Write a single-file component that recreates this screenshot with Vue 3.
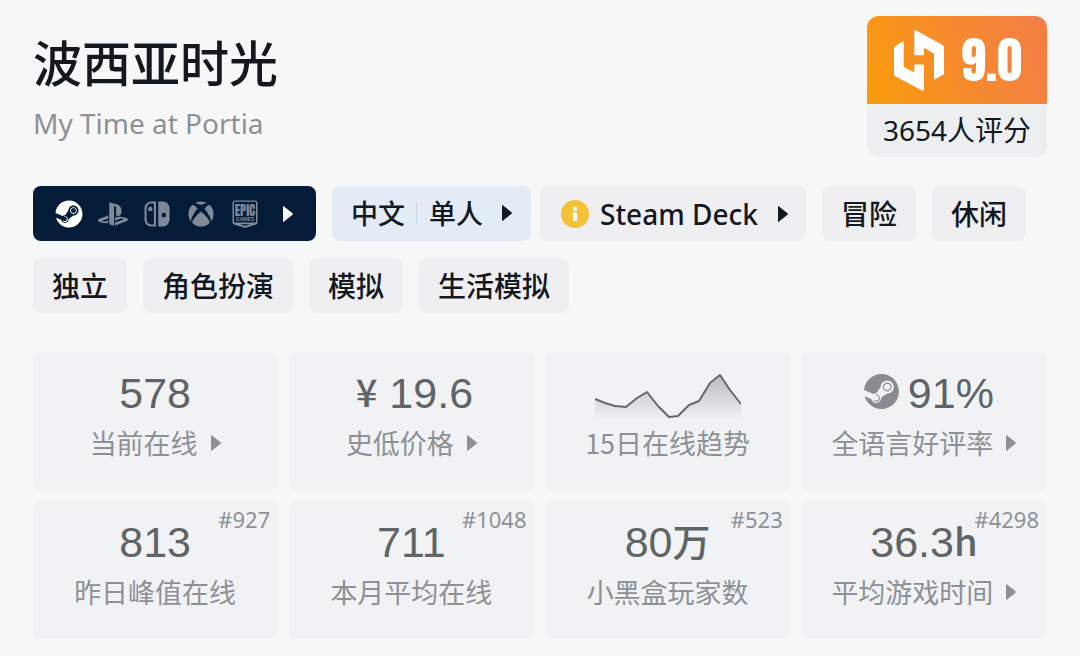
<script setup>
const steamPath =
  'M11.979 0C5.678 0 .511 4.86.022 11.037l6.432 2.658c.545-.371 1.203-.59 1.912-.59.063 0 .125.004.188.006l2.861-4.142V8.91c0-2.495 2.028-4.524 4.524-4.524 2.494 0 4.524 2.031 4.524 4.527s-2.03 4.525-4.524 4.525h-.105l-4.076 2.911c0 .052.004.105.004.159 0 1.875-1.515 3.396-3.39 3.396-1.635 0-3.016-1.173-3.331-2.727L.436 15.27C1.862 20.307 6.486 24 11.979 24c6.627 0 11.999-5.373 11.999-12S18.605 0 11.979 0zM7.54 18.21l-1.473-.61c.262.543.714.999 1.314 1.25 1.297.539 2.793-.076 3.332-1.375.263-.63.264-1.319.005-1.949s-.75-1.121-1.377-1.383c-.624-.26-1.29-.249-1.878-.03l1.523.63c.956.4 1.409 1.5 1.009 2.455-.397.957-1.497 1.41-2.454 1.012H7.54zm11.415-9.303c0-1.662-1.353-3.015-3.015-3.015-1.665 0-3.015 1.353-3.015 3.015 0 1.665 1.35 3.015 3.015 3.015 1.663 0 3.015-1.35 3.015-3.015zm-5.273-.005c0-1.252 1.013-2.266 2.265-2.266 1.249 0 2.266 1.014 2.266 2.266 0 1.251-1.017 2.265-2.266 2.265-1.253 0-2.265-1.014-2.265-2.265z'

const genres = ['冒险', '休闲', '独立', '角色扮演', '模拟', '生活模拟']

const stats = [
  { value: '578', label: '当前在线', more: true },
  { prefix: '¥', value: '19.6', label: '史低价格', more: true },
  { chart: true, label: '15日在线趋势' },
  { steam: true, value: '91%', label: '全语言好评率', more: true },
  { value: '813', label: '昨日峰值在线', rank: '#927' },
  { value: '711', label: '本月平均在线', rank: '#1048' },
  { value: '80', unit: '万', label: '小黑盒玩家数', rank: '#523' },
  { value: '36.3', unit: 'h', label: '平均游戏时间', rank: '#4298', more: true },
]

const trend = '0,31 10,35 20,38 31,39 42,30 52,24 63,38 74,49 83,48 94,37 104,33 115,15 125,7 135,22 146,36'
</script>

<template>
  <main class="page">
    <header class="header">
      <div class="titles">
        <h1 class="title">波西亚时光</h1>
        <p class="subtitle">My Time at Portia</p>
      </div>
      <section class="score">
        <div class="score-top">
          <svg class="logo" viewBox="0 0 50 61" aria-hidden="true">
            <path d="M1 16.200 9.700 11v26L20.300 42.500V34.500H30V60Q30 61.500 28.500 60.700L1 46Q0 45.500 0 44.500V18Q0 16.800 1 16.200Z" />
            <path d="M20.300 1Q20.300-.500 21.700.300L49 15.200Q50 15.800 50 17V44.300L40 49.700V23.700L30 17.700V25.300H20.300Z" />
          </svg>
          <strong class="score-value">9.0</strong>
        </div>
        <p class="score-count">3654人评分</p>
      </section>
    </header>

    <nav class="tags">
      <button class="tag platforms" aria-label="平台">
        <svg class="platform on" viewBox="0 0 28 28"><path transform="translate(.5 .5) scale(1.125)" :d="steamPath" /></svg>
        <svg class="platform wide" viewBox="0 0 24 24">
          <path d="M8.985 2.596v17.548l3.915 1.261V6.688c0-.69.304-1.151.794-.991.636.181.76.814.76 1.505v5.876c2.441 1.193 4.362-.002 4.362-3.153 0-3.237-1.126-4.675-4.438-5.827-1.307-.448-3.728-1.186-5.391-1.502h-.002zm4.656 16.242l6.296-2.275c.715-.258.826-.625.246-.818-.586-.192-1.637-.139-2.357.123l-4.205 1.499v-2.385l.24-.085s1.201-.42 2.913-.615c1.696-.18 3.785.029 5.437.661 1.848.601 2.041 1.472 1.576 2.072s-1.622 1.036-1.622 1.036l-8.544 3.107v-2.297l.02-.023zM1.808 18.6c-1.900-.545-2.214-1.668-1.352-2.321.801-.585 2.159-1.051 2.159-1.051l5.616-2.013v2.313L4.205 17c-.705.271-.825.632-.239.826.586.195 1.637.15 2.343-.12L8.247 17v2.074c-.12.03-.256.044-.39.073-1.939.33-3.996.196-6.038-.479z" />
        </svg>
        <svg class="platform" viewBox="0 0 28 28">
          <path fill-rule="evenodd" d="M8 1.500h5v25H8a6.500 6.500 0 0 1-6.500-6.500V8A6.500 6.500 0 0 1 8 1.500zM8 3.600A4.400 4.400 0 0 0 3.600 8v12A4.400 4.400 0 0 0 8 24.400h2.900V3.600z" />
          <circle cx="7.300" cy="9" r="2.300" />
          <path fill-rule="evenodd" d="M15.300 1.500H20A6.500 6.500 0 0 1 26.500 8v12a6.500 6.500 0 0 1-6.500 6.500h-4.700zM20.800 12.800a2.300 2.300 0 1 0 0 4.600 2.300 2.300 0 0 0 0-4.600z" />
        </svg>
        <svg class="platform" viewBox="-1.400 -1.400 26.800 26.800">
          <path d="M4.102 21.033C6.211 22.881 8.977 24 12 24c3.026 0 5.789-1.119 7.902-2.967 1.877-1.912-4.316-8.709-7.902-11.417-3.582 2.708-9.779 9.505-7.898 11.417zm11.160-14.406c2.500 2.961 7.484 10.313 6.076 12.912C23.002 17.480 24 14.861 24 12.004c0-3.340-1.365-6.362-3.570-8.536 0 0-.027-.022-.082-.042-.063-.022-.152-.045-.281-.045-.592 0-1.985.434-4.805 3.246zM3.654 3.426c-.057.020-.082.041-.086.042C1.365 5.642 0 8.664 0 12.004c0 2.854.998 5.473 2.661 7.533-1.401-2.605 3.579-9.951 6.080-12.910-2.820-2.813-4.216-3.245-4.806-3.245-.131 0-.223.021-.281.046v-.002zM12 3.551S9.055 1.828 6.755 1.746c-.903-.033-1.454.295-1.521.339C7.379.646 9.659 0 11.984 0H12c2.334 0 4.605.646 6.766 2.085-.068-.046-.615-.372-1.520-.339C14.946 1.828 12 3.545 12 3.545v.006z" />
        </svg>
        <svg class="platform" viewBox="0 0 28 28">
          <path fill-rule="evenodd" d="M4 .500h20a2.500 2.500 0 0 1 2.500 2.500v19.500q0 1.500-1.500 2L14 28 3 24.500q-1.500-.500-1.500-2V3A2.500 2.500 0 0 1 4 .500zM4 1.700a1 1 0 0 0-1 1v19.800h22V2.700a1 1 0 0 0-1-1zM9 24.200l5 1.800 5-1.800z" />
          <text text-anchor="middle"><tspan class="epic" x="14" y="16">EPIC</tspan><tspan class="games" x="14" y="21">GAMES</tspan></text>
        </svg>
        <svg class="arrow" viewBox="0 0 10 16"><path d="M0 .500Q0-.500 1 .500L9.500 7.200Q10.300 8 9.500 8.800L1 15.500Q0 16.500 0 15.500Z" /></svg>
      </button>
      <div class="tag-pair">
        <button class="tag modes">
          <span>中文</span><i class="divider"></i><span>单人</span>
          <svg class="arrow" viewBox="0 0 10 16"><path d="M0 .500Q0-.500 1 .500L9.500 7.200Q10.300 8 9.500 8.800L1 15.500Q0 16.500 0 15.500Z" /></svg>
        </button>
        <button class="tag deck">
          <svg class="info" viewBox="0 0 28 28" aria-hidden="true">
            <circle cx="14" cy="14" r="14" />
            <path d="M14 6.500a2.200 2.200 0 1 0 0 4.400 2.200 2.200 0 0 0 0-4.400zM11.500 12.500H16V21h-4v-6h-.500z" />
          </svg>
          <span class="deck-name">Steam Deck</span>
          <svg class="arrow" viewBox="0 0 10 16"><path d="M0 .500Q0-.500 1 .500L9.500 7.200Q10.300 8 9.500 8.800L1 15.500Q0 16.500 0 15.500Z" /></svg>
        </button>
      </div>
      <button v-for="g in genres" :key="g" class="tag">{{ g }}</button>
    </nav>

    <section class="stats">
      <component :is="s.more ? 'button' : 'div'" v-for="s in stats" :key="s.label" class="stat">
        <span v-if="s.rank" class="rank">{{ s.rank }}</span>
        <svg v-if="s.chart" class="chart" viewBox="0 0 146 50" role="img" aria-label="15日在线趋势">
          <defs>
            <linearGradient id="fade" x1="0" y1="0" x2="0" y2="1">
              <stop offset="0" stop-color="#64696c" stop-opacity=".4" />
              <stop offset="1" stop-color="#64696c" stop-opacity="0.02" />
            </linearGradient>
          </defs>
          <polygon :points="`0,50 ${trend} 146,50`" fill="url(#fade)" />
          <polyline :points="trend" fill="none" stroke="#64696c" stroke-width="2" stroke-linejoin="round" />
        </svg>
        <span v-else class="value">
          <svg v-if="s.steam" class="steam" viewBox="0 0 24 24" aria-hidden="true"><path :d="steamPath" /></svg>
          <span v-if="s.prefix" class="currency">{{ s.prefix }}</span>
          <span>{{ s.value }}</span>
          <span v-if="s.unit" class="unit">{{ s.unit }}</span>
        </span>
        <span class="label">
          {{ s.label }}
          <svg v-if="s.more" class="arrow" viewBox="0 0 10 16" aria-hidden="true"><path d="M0 .500Q0-.500 1 .500L9.500 7.200Q10.300 8 9.500 8.800L1 15.500Q0 16.500 0 15.500Z" /></svg>
        </span>
      </component>
    </section>
  </main>
</template>

<style>
body {
  margin: 0;
  background: #f7f7f7;
}
</style>

<style scoped>
.page {
  box-sizing: border-box;
  padding: 16px 33px;
  color: #14181f;
  font-family: "Noto Sans CJK SC", sans-serif;
}
button {
  border: 0;
  margin: 0;
  padding: 0;
  color: inherit;
  font: inherit;
  cursor: pointer;
}
svg {
  display: block;
  flex: none;
  fill: currentColor;
}
.header {
  display: flex;
  justify-content: space-between;
  align-items: flex-start;
}
.titles {
  padding-top: 15px;
}
.title {
  margin: 0;
  font-size: 49px;
  line-height: 60px;
  font-weight: 500;
}
.subtitle {
  margin: 12px 0 0;
  color: #8c9196;
  font-family: "Noto Sans", sans-serif;
  font-size: 28px;
  line-height: 40px;
}
.score {
  width: 180px;
  border-radius: 12px;
  overflow: hidden;
  background: #edeef0;
}
.score-top {
  display: flex;
  align-items: center;
  gap: 17px;
  height: 88px;
  padding-left: 27px;
  color: #fff;
  background: linear-gradient(70deg, #f99d0c, #f58a2c 50%, #f37d48);
}
.logo {
  width: 50px;
  height: 61px;
}
.score-value {
  font-family: Impact, Anton, "Roboto Condensed", "Open Sans Condensed", Roboto, sans-serif;
  font-size: 50px;
  font-weight: 400;
  line-height: 60px;
}
.score-count {
  margin: 0;
  text-align: center;
  font-family: "Noto Sans", "Noto Sans CJK SC", sans-serif;
  font-size: 28px;
  line-height: 53px;
}
.tags {
  display: flex;
  flex-wrap: wrap;
  gap: 17px 16px;
  margin-top: 29px;
}
.tag {
  display: flex;
  align-items: center;
  height: 55px;
  padding: 0 19px 2px;
  border-radius: 8px;
  background: #efeff2;
  font-size: 28px;
  font-weight: 500;
  line-height: 40px;
}
.tag-pair {
  display: flex;
  gap: 9px;
}
.platforms {
  gap: 16px;
  padding: 0 23px 0 22px;
  background: #051c38;
  color: #7e8a98;
}
.platform {
  width: 28px;
  height: 28px;
}
.wide {
  width: 30px;
  height: 30px;
  margin: 0 -1px;
}
.on,
.platforms .arrow {
  color: #fff;
}
.platforms .arrow {
  margin-left: 8px;
}
.epic {
  font: 400 13px Impact, Anton, "Liberation Sans", sans-serif;
}
.games {
  font: bold 5px "Liberation Sans", sans-serif;
}
.arrow {
  width: 10px;
  height: 16px;
}
.modes {
  background: #e3ebf4;
  font-size: 27px;
}
.divider {
  width: 1px;
  height: 22px;
  margin: 0 12px 0 11px;
  background: #ccd5de;
}
.modes .arrow {
  margin-left: 19px;
}
.deck {
  padding: 0 18px 0 21px;
}
.deck .arrow {
  margin-left: 20px;
}
.deck-name {
  font-family: "Noto Sans", sans-serif;
}
.info {
  width: 28px;
  height: 28px;
  margin-right: 11px;
}
.info circle {
  fill: #f3c237;
}
.info path {
  fill: #fff;
}
.stats {
  display: grid;
  grid-template-columns: repeat(4, 1fr);
  gap: 11px 12px;
  margin: 39px 1px 0 0;
}
.stat {
  position: relative;
  display: flex;
  flex-direction: column;
  align-items: center;
  gap: 7px;
  padding: 16px 0 29px;
  border-radius: 6px;
  background: #f1f2f4;
}
.value {
  display: flex;
  align-items: center;
  height: 50px;
  color: #5f6467;
  font-family: "Liberation Sans", sans-serif;
  font-size: 43px;
  line-height: 50px;
}
.steam {
  width: 35px;
  height: 35px;
  margin: 0 9px 4px 10px;
  color: #878c90;
}
.currency,
.unit {
  padding-bottom: 4px;
  font-family: "Noto Sans CJK SC", sans-serif;
  font-size: 38px;
  font-weight: 500;
}
.currency {
  margin: 0 12px 0 6px;
}
.chart {
  width: 146px;
  height: 50px;
}
.label {
  display: flex;
  align-items: center;
  gap: 13px;
  color: #8c9196;
  font-size: 27px;
  line-height: 36px;
}
.rank {
  position: absolute;
  top: 4px;
  right: 7px;
  color: #8c9196;
  font-family: "Noto Sans", sans-serif;
  font-size: 22px;
  line-height: 28px;
}
</style>
